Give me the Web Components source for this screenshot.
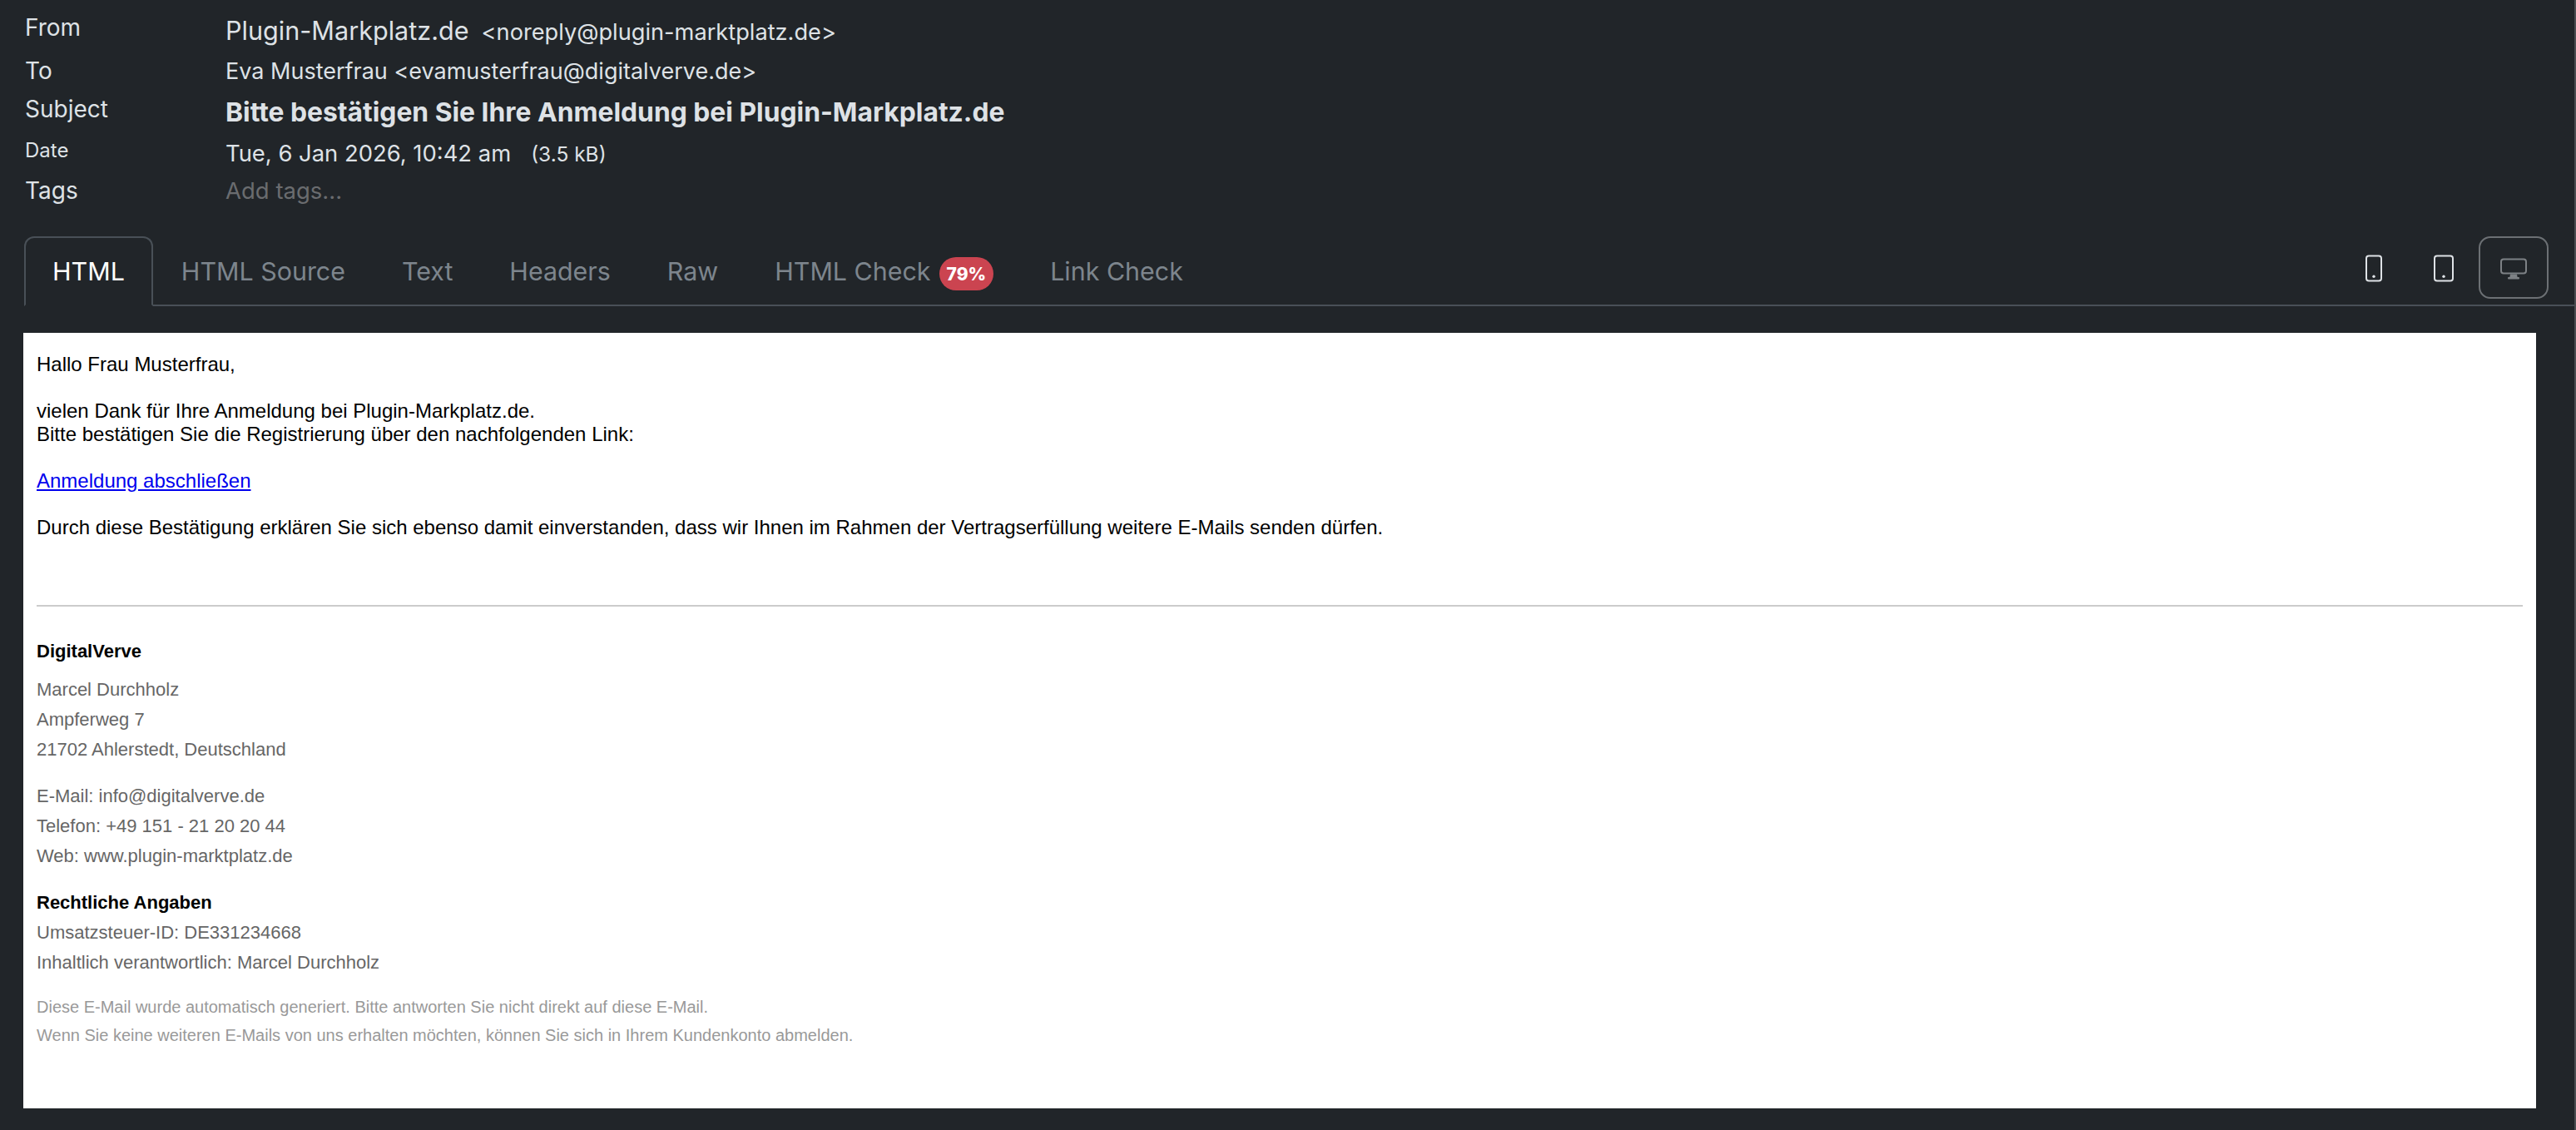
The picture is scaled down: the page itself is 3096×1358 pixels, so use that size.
<!DOCTYPE html>
<html lang="de">
<head>
<meta charset="utf-8">
<title>Mail</title>
<style>
  html, body { margin: 0; padding: 0; background: #212529; }
  body { width: 3096px; height: 1358px; overflow: hidden; font-family: Inter, "Liberation Sans", sans-serif; }
</style>
</head>
<body>
<mail-view>
  <mail-header>
    <header-row label="From" height="53" label-pad="1" value-pad="5">
      <span style="font-size:30.6px">Plugin-Markplatz.de</span><span style="font-size:27.2px;margin-left:15px">&lt;noreply@plugin-marktplatz.de&gt;</span>
    </header-row>
    <header-row label="To" height="46" value-pad="1"><span style="font-size:27px">Eva Musterfrau &lt;evamusterfrau@digitalverve.de&gt;</span></header-row>
    <header-row label="Subject" height="50" value-pad="4"><b style="font-size:31.8px;font-weight:700">Bitte bestätigen Sie Ihre Anmeldung bei Plugin-Markplatz.de</b></header-row>
    <header-row label="Date" height="48" size="24" value-pad="3"><span style="font-size:27.4px">Tue, 6 Jan 2026, 10:42 am</span><span style="font-size:24.500px;margin-left:24px">(3.5 kB)</span></header-row>
    <header-row label="Tags" height="63"><span style="font-size:27.500px;color:#6a6c6f">Add tags...</span></header-row>
  </mail-header>
  <tab-bar>
    <tab-item active>HTML</tab-item>
    <tab-item>HTML Source</tab-item>
    <tab-item>Text</tab-item>
    <tab-item>Headers</tab-item>
    <tab-item>Raw</tab-item>
    <tab-item>HTML Check <check-badge>79%</check-badge></tab-item>
    <tab-item>Link Check</tab-item>
    <device-button slot="devices" kind="phone"></device-button>
    <device-button slot="devices" kind="tablet"></device-button>
    <device-button slot="devices" kind="desktop" active></device-button>
  </tab-bar>
  <mail-frame>
    <mail-message></mail-message>
    <mail-signature></mail-signature>
  </mail-frame>
</mail-view>

<script>
  class MailView extends HTMLElement {
    constructor() {
      super();
      this.attachShadow({ mode: "open" });
      this.shadowRoot.innerHTML = `
        <style>
          :host { display: block; box-sizing: border-box; height: 1358px; border-right: 2px solid #4a4d50; color: #dee2e6; }
        </style>
        <slot></slot>
      `;
    }
  }

  class MailHeader extends HTMLElement {
    constructor() {
      super();
      this.attachShadow({ mode: "open" });
      this.shadowRoot.innerHTML = `
        <style>
          :host { display: flex; flex-direction: column; padding: 12px 0 0 30px; height: 284px; box-sizing: border-box; overflow: hidden; }
        </style>
        <slot></slot>
      `;
    }
  }

  class HeaderRow extends HTMLElement {
    constructor() {
      super();
      this.attachShadow({ mode: "open" });
    }

    connectedCallback() {
      const label = this.getAttribute("label") || "";
      const height = this.getAttribute("height") || "48";
      const size = this.getAttribute("size") || "28";
      const labelPad = this.getAttribute("label-pad") || "0";
      const valuePad = this.getAttribute("value-pad") || "0";
      this.shadowRoot.innerHTML = `
        <style>
          :host { display: flex; align-items: flex-start; flex: none; height: ${height}px; color: #dee2e6; line-height: 40px; }
          .label { width: 241px; flex: none; font-size: ${size}px; padding-top: ${labelPad}px; }
          .value { white-space: nowrap; padding-top: ${valuePad}px; }
        </style>
        <div class="label">${label}</div>
        <div class="value"><slot></slot></div>
      `;
    }
  }

  class TabBar extends HTMLElement {
    constructor() {
      super();
      this.attachShadow({ mode: "open" });
      this.shadowRoot.innerHTML = `
        <style>
          :host { display: flex; justify-content: space-between; align-items: stretch; height: 84px; margin-left: 29px; border-bottom: 2px solid #495057; box-sizing: border-box; padding-right: 31px; }
          .tabs, .devices { display: flex; }
          .devices { align-items: flex-start; }
        </style>
        <div class="tabs"><slot></slot></div>
        <div class="devices"><slot name="devices"></slot></div>
      `;
    }
  }

  class TabItem extends HTMLElement {
    constructor() {
      super();
      this.attachShadow({ mode: "open" });
      this.shadowRoot.innerHTML = `
        <style>
          :host { display: flex; align-items: center; height: 84px; box-sizing: border-box; padding: 0 32px; border: 2px solid transparent; border-radius: 12px 12px 0 0; font-size: 30.4px; color: #7d858d; white-space: nowrap; }
          :host([active]) { color: #fff; border-color: #495057; border-bottom-color: #212529; }
        </style>
        <slot></slot>
      `;
    }
  }

  class CheckBadge extends HTMLElement {
    constructor() {
      super();
      this.attachShadow({ mode: "open" });
      this.shadowRoot.innerHTML = `
        <style>
          :host { display: block; margin: 6px 0 0 10px; padding: 0 9px; height: 40px; border-radius: 20px; background: #cb4450; color: #fff; font-size: 21px; font-weight: 800; line-height: 41px; }
        </style>
        <slot></slot>
      `;
    }
  }

  const DEVICE_ICONS = {
    phone: `<svg width="22" height="34" viewBox="0 0 22 34"><rect x="2" y="2.500" width="18" height="30" rx="3" fill="none" stroke="#dee2e6" stroke-width="2"/><circle cx="11" cy="27.200" r="1.700" fill="#dee2e6"/></svg>`,
    tablet: `<svg width="26" height="34" viewBox="0 0 26 34"><rect x="2" y="2.500" width="22" height="30" rx="3" fill="none" stroke="#dee2e6" stroke-width="2"/><circle cx="13" cy="27.200" r="1.700" fill="#dee2e6"/></svg>`,
    desktop: `<svg width="34" height="28" viewBox="0 0 34 28"><rect x="2" y="3.500" width="30" height="17" rx="3" fill="none" stroke="#7d8185" stroke-width="2"/><path d="M13 21.500h8l.6 3.500h-9.200z" fill="#7d8185"/><rect x="10" y="25" width="14" height="2.500" rx="1" fill="#7d8185"/></svg>`
  };

  class DeviceButton extends HTMLElement {
    constructor() {
      super();
      this.attachShadow({ mode: "open" });
    }

    connectedCallback() {
      const kind = this.getAttribute("kind") || "phone";
      this.shadowRoot.innerHTML = `
        <style>
          :host { display: flex; align-items: center; justify-content: center; width: 84px; height: 75px; box-sizing: border-box; border: 2px solid transparent; border-radius: 14px; }
          :host([active]) { border-color: #6c7074; }
          svg { display: block; }
        </style>
        ${DEVICE_ICONS[kind]}
      `;
    }
  }

  class MailFrame extends HTMLElement {
    constructor() {
      super();
      this.attachShadow({ mode: "open" });
      this.shadowRoot.innerHTML = `
        <style>
          :host { display: block; box-sizing: border-box; width: 3020px; height: 932px; margin: 32px 0 0 28px; padding: 24px 16px 0; background: #fff; color: #000; font-family: "Liberation Sans", Arial, sans-serif; }
        </style>
        <slot></slot>
      `;
    }
  }

  class MailMessage extends HTMLElement {
    constructor() {
      super();
      this.attachShadow({ mode: "open" });
      this.shadowRoot.innerHTML = `
        <style>
          :host { display: block; font-size: 24px; line-height: 28px; }
          p { margin: 0 0 28px; }
          p:last-child { margin-bottom: 0; }
          a { color: #0000ee; }
        </style>
        <p>Hallo Frau Musterfrau,</p>
        <p>vielen Dank für Ihre Anmeldung bei Plugin-Markplatz.de.<br>Bitte bestätigen Sie die Registrierung über den nachfolgenden Link:</p>
        <p><a href="#">Anmeldung abschließen</a></p>
        <p>Durch diese Bestätigung erklären Sie sich ebenso damit einverstanden, dass wir Ihnen im Rahmen der Vertragserfüllung weitere E-Mails senden dürfen.</p>
      `;
    }
  }

  class MailSignature extends HTMLElement {
    constructor() {
      super();
      this.attachShadow({ mode: "open" });
      this.shadowRoot.innerHTML = `
        <style>
          :host { display: block; margin-top: 79px; border-top: 2px solid #ccc; padding-top: 36px; font-size: 22px; line-height: 36px; color: #666; }
          p { margin: 0 0 20px; }
          strong { color: #000; }
          .head { margin-bottom: 10px; }
          .note { margin: 0; font-size: 20px; line-height: 34px; color: #999; }
          .legal { margin-bottom: 18px; }
        </style>
        <p class="head"><strong>DigitalVerve</strong></p>
        <p>Marcel Durchholz<br>Ampferweg 7<br>21702 Ahlerstedt, Deutschland</p>
        <p>E-Mail: info@digitalverve.de<br>Telefon: +49 151 - 21 20 20 44<br>Web: www.plugin-marktplatz.de</p>
        <p class="legal"><strong>Rechtliche Angaben</strong><br>Umsatzsteuer-ID: DE331234668<br>Inhaltlich verantwortlich: Marcel Durchholz</p>
        <p class="note">Diese E-Mail wurde automatisch generiert. Bitte antworten Sie nicht direkt auf diese E-Mail.<br>Wenn Sie keine weiteren E-Mails von uns erhalten möchten, können Sie sich in Ihrem Kundenkonto abmelden.</p>
      `;
    }
  }

  customElements.define("mail-view", MailView);
  customElements.define("mail-header", MailHeader);
  customElements.define("header-row", HeaderRow);
  customElements.define("tab-bar", TabBar);
  customElements.define("tab-item", TabItem);
  customElements.define("check-badge", CheckBadge);
  customElements.define("device-button", DeviceButton);
  customElements.define("mail-frame", MailFrame);
  customElements.define("mail-message", MailMessage);
  customElements.define("mail-signature", MailSignature);
</script>
</body>
</html>
